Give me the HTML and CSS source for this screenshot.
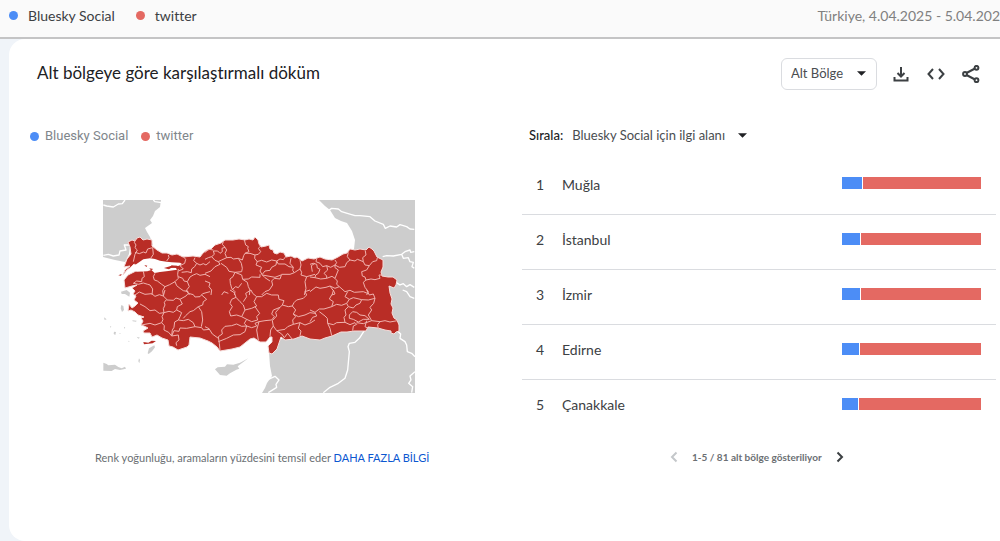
FILE: index.html
```html
<!DOCTYPE html>
<html lang="tr">
<head>
<meta charset="utf-8">
<title>Alt bölgeye göre karşılaştırmalı döküm</title>
<meta name="viewport" content="width=device-width, initial-scale=1">
<link rel="stylesheet" href="styles.css">
</head>
<body>
<header class="topbar">
  <ul class="terms">
    <li class="term"><span class="dot blue"></span>Bluesky Social</li>
    <li class="term"><span class="dot red"></span>twitter</li>
  </ul>
  <div class="period">Türkiye, 4.04.2025 - 5.04.202</div>
</header>
<main class="card">
  <div class="card-head">
    <h1 class="title">Alt bölgeye göre karşılaştırmalı döküm</h1>
    <div class="drop boxed">
      <select class="drop-select" aria-label="Çözünürlük"><option>Alt Bölge</option></select>
      <svg class="caret" viewBox="0 0 10 5" aria-hidden="true"><path d="M0 0h10L5 5z"/></svg>
    </div>
    <div class="tools">
      <button class="tool" type="button" aria-label="İndir"><svg viewBox="0 0 18 18"><path d="M9 2v9M5.500 8L9 11.500L12.500 8M2.500 12v3.500h13V12"/></svg></button>
      <button class="tool" type="button" aria-label="Yerleştir"><svg viewBox="0 0 18 18"><path d="M6 4L1.500 9L6 14M12 4l4.500 5L12 14"/></svg></button>
      <button class="tool" type="button" aria-label="Paylaş"><svg viewBox="0 0 18 18"><g class="thin"><path d="M4.500 8L13 3.500M4.500 10L13 14.500"/><circle cx="3" cy="9" r="1.900"/><circle cx="14.500" cy="2.800" r="1.900"/><circle cx="14.500" cy="15.200" r="1.900"/></g></svg></button>
    </div>
  </div>
  <div class="panels">
    <section class="map-panel">
      <ul class="legend">
        <li class="legend-item"><span class="dot blue"></span>Bluesky Social</li>
        <li class="legend-item"><span class="dot red"></span>twitter</li>
      </ul>
      <svg class="map" viewBox="103 200 312 193" role="img" aria-label="Türkiye haritası">
        <g class="land">
          <path d="M103 200H161L160 207L155 211L153 216L150 220L152 223L145 228L147 232L150 237L153 245L130 245L129 254L125 262L115 260L103 257Z"/>
          <path d="M319 200L325 206L330 210L335 218L341 221L347 223L352 231L355 240L354 249L350 290L300 330L269 345L269 352L270 366L272 376L267 383L265 388L262 393H415V200Z"/>
          <g transform="translate(205 290) scale(.3333)"><path d="M30 238L38 232L60 230L66 223L85 224L105 218L130 205L98 229L103 236L94 239L75 250L65 257L45 255Z"/></g>
          <g transform="translate(100 290) scale(.3333)"><path d="M10 218L20 222L25 226L45 224L55 231L65 235L75 230L78 236L60 240L45 237L35 243L10 242ZM143 190L147 175L163 166L165 172L156 184L146 192ZM63 5L80 0L90 8L88 20L75 12L65 12ZM64 45L70 48L72 60L66 66L62 55ZM97 91L110 92L108 95L98 94ZM42 125L48 126L46 135L41 132ZM12 82L20 88L14 90ZM117 205L120 210L118 220L115 214ZM72 110L76 113L72 116ZM58 129L62 130L60 133ZM30 108L34 110L31 113ZM110 140L120 143L115 146ZM85 152L89 154L86 156Z"/></g>
        </g>
        <g class="frontier">
          <g transform="translate(100 195) scale(.3333)"><path d="M10 30L20 33L40 36L55 27L67 26L75 15M160 15L165 20L184 23M10 181L25 178L40 183L57 180L60 168L78 165L73 150L88 150"/></g>
          <g transform="translate(310 195) scale(.3333)"><path d="M55 47L65 40L85 42L95 50L112 55L135 62L150 62L180 65L195 78L220 88L226 100L240 93L260 96L270 89L290 95L300 102L313 103M218 185L230 182L250 183L275 178L285 170L300 165L302 172L313 170M275 178L280 190L295 188L300 200L310 202L306 215L313 220M258 262L270 270L280 266L290 275L300 269L313 277"/></g>
          <g transform="translate(310 290) scale(.3333)"><path d="M163 122L148 145L135 157L118 160L114 170L118 185L113 240L105 265L85 280L60 292L40 308M262 122L272 132L270 145L285 155L290 165L292 185L305 190L315 200M278 0L290 5L300 20L313 25M315 245L300 258L303 270L296 280L308 290L305 308"/></g>
          <g transform="translate(205 290) scale(.3333)"><path d="M190 268L210 259L222 270L213 283L215 292L190 308"/></g>
        </g>
        <path class="country" d="M128 242L132 240L135 241L137 238L140 237L143 240L147 239L152 240L152 246L157 250L162 253L167 253L172 255L177 254L183 257L193 256L200 257L203 253L207 250L211 249L215 245L221 243L225 240L233 240L239 239L245 240L249 239L253 240L255 237L258 240L259 244L261 247L266 246L269 245L270 249L273 250L274 253L277 254L280 252L284 253L286 257L291 256L295 258L297 257L302 261L308 258L314 259L320 257L325 259L332 260L338 257L343 254L347 253L350 249L355 250L360 249L366 250L369 247L372 249L374 251L377 257L383 260L383 267L381 272L382 276L388 277L393 277L397 280L396 285L394 288L389 286L390 293L392 299L391 304L393 308L392 313L394 318L397 320L399 325L399 331L396 332L394 334L391 333L391 331L385 330L378 328L368 327L366 331L360 331L354 331L347 332L341 332L332 336L325 338L320 340L310 339L302 336L294 339L285 340L281 337L279 343L277 349L272 354L269 353L268 346L272 342L272 337L270 337L266 342L260 342L254 338L250 339L245 343L240 347L232 349L220 351L217 347L212 343L208 341L200 338L190 337L189 345L187 347L178 350L173 347L169 346L168 340L162 338L157 335L152 337L150 333L144 333L143 331L148 328L144 326L141 325L143 321L141 318L144 317L138 315L135 312L131 310L128 311L129 304L132 308L135 306L138 303L134 300L136 296L133 294L135 291L132 288L137 285L132 286L125 288L124 280L128 275L132 273L138 270L144 271L146 267L140 268L134 264L131 267L127 270L123 275L125 270L130 266L124 267L127 259L131 254L130 247Z"/>
        <g class="sea" transform="translate(100 195) scale(.3333)"><path d="M95 217L115 203L130 193L150 190L165 192L180 197L200 200L215 202L240 203L246 207L235 213L215 211L208 217L228 219L231 224L205 228L180 231L164 234L154 225L142 229L110 230Z"/></g>
        <g class="isle" transform="translate(100 195) scale(.3333)"><path d="M55 241L65 237L63 242ZM133 210L142 212L139 216ZM148 220L160 222L153 226ZM192 219L210 214L230 212L233 217L213 219L207 223Z"/></g>
        <g class="isle" transform="translate(100 290) scale(.3333)"><path d="M130 156L145 158L155 152L168 153L158 160L132 163Z"/></g>
        <g class="province">
          <g transform="translate(100 195) scale(.3333)"><path d="M108 132L103 142L108 150L105 158L112 165L105 178L100 200M105 172L118 176L130 171L138 174L143 162L158 158L160 178L152 190M205 180L207 188L200 198M250 185L257 193L254 205L240 212L250 222L235 228M285 188L281 197L290 205L284 215L275 222L274 233L262 230L245 232M290 205L300 210L310 206L318 210L330 200M130 228L133 245L126 250L125 260L110 258L100 265L115 268L130 264L143 268L150 270L158 282L156 300M165 235L160 245L163 255L172 258L185 268L195 275L209 269L225 260L235 250L233 238L235 222M195 275L188 287L190 300M235 245L248 250L252 258L262 260L268 275L260 285L268 300M262 260L270 246L280 240L290 236L300 241L315 238L330 245M225 260L230 272L240 280L250 287L265 290"/></g>
          <g transform="translate(205 195) scale(.3333)"><path d="M0 193L10 188L20 185L28 178L25 168L38 168L45 175L52 170L51 160L60 157L52 148L55 140M25 165L12 163L0 172M20 185L30 196L40 200L50 195L65 188L60 175L65 165L60 157M40 200L45 208L30 215L18 228L0 235M48 205L65 217L72 229L90 232L110 230L112 220L109 205L100 190L85 192L78 187L65 188M90 232L84 245L75 252L76 265L80 280L90 290L88 300M100 190L112 195L116 182L120 175L132 170L128 160L130 155L122 150L118 135M120 175L135 175L150 180L160 178L167 170L160 160L168 152M150 180L149 190L157 200L153 210L170 217L165 228L172 240L210 247L228 240M155 200L170 196L185 201L200 195L215 198L225 192L235 194L242 185M215 198L213 210L200 217L195 226L180 228L172 238M215 198L220 207L240 207L252 215L265 217L263 226L268 233L255 238L230 238L225 252L208 250L200 258L203 270L193 285L180 290L170 300M90 232L110 240L113 253L130 252L140 246L165 247L165 238M113 253L127 262L130 275L135 285L133 300M80 285L92 275L100 278L110 265M265 217L255 205L258 190M268 233L285 222L290 232L288 240L305 245L330 238M305 245L300 260L303 280L298 300M285 195L288 210L285 222M330 205L319 212L322 230M195 258L180 248L172 240M0 258L15 264L12 275L20 285L18 300M50 300L57 290L70 295"/></g>
          <g transform="translate(310 195) scale(.3333)"><path d="M0 208L10 205L20 208L22 219L30 223L25 235L17 240L15 248L0 246M20 190L18 200L30 205L38 215L50 212L62 217L75 210L80 203L75 195M50 212L53 225L42 235L50 243L50 250L66 244L75 250L85 225L75 218L75 210M75 210L88 217L105 215L110 203L120 195L112 185L115 172M120 195L135 198L142 193L160 200L158 188L168 180L166 168M160 200L165 210L178 212L188 200L200 197L202 188M178 212L170 225L155 230L157 243L165 246L168 255L183 252L195 254L210 250L207 240L218 240M75 250L82 258L80 268L88 275L75 280L60 273L48 277L30 280L18 276L0 290M168 255L160 262L165 277L175 290L170 300M88 275L105 290L120 286L133 292L160 290L172 295M50 250L32 252L15 248M60 273L70 287L66 300"/></g>
          <g transform="translate(100 290) scale(.3333)"><path d="M105 15L118 6L135 13L155 11L165 19L178 14L190 18L195 0M190 18L200 28L193 37L195 45L190 56L192 68L178 70L165 60L150 62L135 50L120 42M200 30L220 31L228 24L240 28L258 18L265 10L258 0M265 10L280 14L285 21L300 20L308 11L330 5M240 28L247 42L232 50L230 60L245 68L240 80L235 90L224 96L222 112L217 120L215 138M192 68L207 64L220 67L230 60M192 68L186 80L189 88L185 98L165 105L150 100L125 105M185 98L193 107L192 120L206 127L215 138L235 135L237 150L228 158L230 167M235 90L250 92L265 88L280 98L285 110L305 113L310 120L330 118M250 85L257 77L270 65L280 62L295 50L305 65L308 90L304 110M295 50L308 45L310 35L320 28L305 15M215 138L222 122L237 124L240 114L260 115L285 110"/></g>
          <g transform="translate(205 290) scale(.3333)"><path d="M75 0L88 8L93 22L80 28L75 40L82 50L73 65L77 78L95 75L110 80L120 60L115 45L105 35L93 22M115 35L125 20L122 10L138 0L143 10L155 20L147 35L155 48L140 55L120 60M110 80L125 88L118 100L125 108L110 109L95 102L80 107L60 109L50 120L52 132L40 140L43 160L45 180M40 155L65 145L85 135L105 134L120 125L125 108M125 88L140 95L158 90L155 80L164 70L150 50M155 108L150 100L162 95L155 120L160 150M125 108L140 113L155 108M155 20L170 20L185 10L200 15L220 15L222 28L237 32L232 45L225 52L205 60L200 72L208 80L200 90L180 92L162 95M232 45L250 50L262 48L267 38L275 30L295 25L305 15L300 5L315 0M225 52L212 67L215 78L202 92L205 108L197 120L195 140M262 48L272 60L265 72L272 80L263 90L265 103L248 110L240 118L215 122L205 108M265 72L280 80L300 75L315 68L330 70M265 103L285 98L300 105L318 98L330 90M285 98L280 115L288 123L285 138M215 122L230 132L238 143L248 130L262 148M0 110L12 116L22 132L40 145"/></g>
          <g transform="translate(310 290) scale(.3333)"><path d="M0 60L15 67L28 57L42 57L65 50L80 43L95 46L110 40L118 28L105 20L113 5M65 50L70 35L58 27L65 15L75 12L70 0M15 67L20 78L8 82L0 95M28 65L45 78L52 85L53 100L60 115L65 137M53 100L70 104L80 98L105 97L102 82L108 75L105 60L115 50L110 40M115 50L130 54L138 45L150 40L155 29L175 30L195 25L190 12L178 15L170 0M118 28L130 23L155 29M195 25L191 40L180 52L185 60L175 75L185 92M118 75L128 65L140 67L150 75L165 77L178 88L160 88L145 96L130 88L118 85L118 75M105 97L120 104L135 98L140 103L130 108L128 122M140 98L160 101L185 92L210 95L225 92L240 96L262 92M210 95L203 104L205 118M170 92L165 110L175 115"/></g>
        </g>
      </svg>
      <p class="note">Renk yoğunluğu, aramaların yüzdesini temsil eder <a class="more" href="#">DAHA FAZLA BİLGİ</a></p>
    </section>
    <section class="list-panel">
      <div class="sort">
        <label class="sort-label" for="sort">Sırala:</label>
        <div class="drop">
          <select class="drop-select" id="sort"><option>Bluesky Social için ilgi alanı</option></select>
          <svg class="caret" viewBox="0 0 10 5" aria-hidden="true"><path d="M0 0h10L5 5z"/></svg>
        </div>
      </div>
      <table class="regions">
        <tbody>
          <tr><td class="rank">1</td><td class="name">Muğla</td><td class="value"><div class="bar"><span class="seg blue" style="width:14.400%"></span><span class="seg red grow"></span></div></td></tr>
          <tr><td class="rank">2</td><td class="name">İstanbul</td><td class="value"><div class="bar"><span class="seg blue" style="width:13%"></span><span class="seg red grow"></span></div></td></tr>
          <tr><td class="rank">3</td><td class="name">İzmir</td><td class="value"><div class="bar"><span class="seg blue" style="width:13%"></span><span class="seg red grow"></span></div></td></tr>
          <tr><td class="rank">4</td><td class="name">Edirne</td><td class="value"><div class="bar"><span class="seg blue" style="width:12%"></span><span class="seg red grow"></span></div></td></tr>
          <tr><td class="rank">5</td><td class="name">Çanakkale</td><td class="value"><div class="bar"><span class="seg blue" style="width:11.500%"></span><span class="seg red grow"></span></div></td></tr>
        </tbody>
      </table>
      <nav class="pager" aria-label="Sayfalar">
        <button class="page" type="button" aria-label="Önceki" disabled><svg viewBox="0 0 8 12"><path d="M6.500 1.500L2 6l4.500 4.500"/></svg></button>
        <span>1-5 / 81 alt bölge gösteriliyor</span>
        <button class="page" type="button" aria-label="Sonraki"><svg viewBox="0 0 8 12"><path d="M1.500 1.500L6 6l-4.500 4.500"/></svg></button>
      </nav>
    </section>
  </div>
</main>
</body>
</html>
```
FILE: styles.css
```css
* { box-sizing: border-box; }
body {
  margin: 0;
  min-height: 100vh;
  display: flex;
  flex-direction: column;
  background: #f0f4f9;
  color: #3c4043;
  font-family: Lato, "Open Sans", sans-serif;
  font-size: 14px;
  font-variant-ligatures: none;
}
ul, h1, p { margin: 0; padding: 0; list-style: none; }
button { border: 0; padding: 0; background: none; color: inherit; }
.topbar {
  height: 39px;
  padding: 0 0 6px 9px;
  display: flex;
  align-items: center;
  justify-content: space-between;
  background: #fafafa;
  border-bottom: 2px solid #c4c4c5;
}
.terms { display: flex; gap: 21px; }
.term { display: flex; align-items: center; gap: 10px; }
.dot { width: 9px; height: 9px; border-radius: 50%; flex: none; }
.blue { background: #4c8df6; }
.red { background: #e46962; }
.period { color: #808080; white-space: nowrap; }
.card {
  flex: 1;
  margin-left: 9px;
  background: #fff;
  border-radius: 16px 0 0 16px;
}
.card-head {
  display: flex;
  align-items: center;
  padding: 19px 20px 0 28px;
  height: 51px;
}
.title { flex: 1; font-size: 17px; line-height: 20px; padding-bottom: 2px; font-weight: 400; color: #202124; }
.drop { display: grid; align-items: center; }
.drop-select {
  grid-area: 1 / 1;
  appearance: none;
  border: 0;
  background: none;
  margin: 0;
  padding: 0 23px 0 0;
  font: inherit;
  color: #4a4d50;
}
.caret {
  grid-area: 1 / 1;
  justify-self: end;
  width: 9px;
  height: 5px;
  pointer-events: none;
  fill: #202124;
}
.boxed {
  width: 96px;
  height: 32px;
  padding: 0 10px 2px 9px;
  border: 1px solid #dadce0;
  border-radius: 6px;
  font-size: 13px;
}
.boxed .drop-select { padding-right: 16px; }
.tools { display: flex; gap: 17px; margin-left: 15px; }
.tool { width: 18px; height: 18px; }
.tool svg, .page svg {
  display: block;
  width: 100%;
  height: 100%;
  fill: none;
  stroke: #3c4043;
  stroke-width: 2;
}
.tool .thin { stroke-width: 2; }
.panels {
  display: grid;
  grid-template-columns: 513fr 478fr;
}
.map-panel { padding: 37px 0 0 21px; }
.legend {
  display: flex;
  gap: 13px;
  color: #80868b;
  font-family: Roboto, sans-serif;
  font-size: 13px;
  line-height: 18px;
}
.legend-item { display: flex; align-items: center; gap: 6px; }
.map {
  display: block;
  width: 312px;
  max-width: 100%;
  margin: 55px 0 0 73px;
}
.land { fill: #cdcdcd; }
.frontier { fill: none; stroke: #fff; stroke-width: 4; stroke-linejoin: round; }
.country { fill: #b92d26; stroke: #f6dcda; stroke-width: 1; stroke-linejoin: round; }
.sea { fill: #fff; }
.isle { fill: #b92d26; }
.province { fill: none; stroke: #f0b2ae; stroke-width: 3; stroke-linejoin: round; }
.note {
  margin-top: 57px;
  padding-left: 65px;
  font-size: 11px;
  line-height: 16px;
  color: #6b6f73;
}
.more { color: #0b57d0; text-decoration: none; }
.list-panel { padding-top: 35px; }
.sort {
  display: flex;
  align-items: center;
  gap: 9px;
  padding-left: 7px;
  height: 20px;
  font-size: 13px;
}
.sort-label { font-weight: 500; color: #202124; }
.sort .drop-select { padding-right: 21px; }
.regions { width: calc(100% - 4px); margin-top: 14px; border-collapse: collapse; }
.regions td { height: 55px; padding: 0 0 4px; border-bottom: 1px solid #dadce0; }
.regions tr:last-child td { border-bottom: 0; }
.rank { width: 40px; }
.regions .rank { padding-left: 14px; }
.regions .value { width: 154px; padding: 0 15px 6px 0; }
.bar { display: flex; gap: 1px; height: 12px; }
.grow { flex: 1; }
.pager {
  display: flex;
  align-items: center;
  gap: 14px;
  margin-top: 15px;
  padding-left: 148px;
  font-size: 10px;
  font-weight: 700;
  color: #6b6f73;
  line-height: 16px;
}
.page { width: 8px; height: 12px; }
.page:disabled svg { stroke: #c4c7ca; }
```
